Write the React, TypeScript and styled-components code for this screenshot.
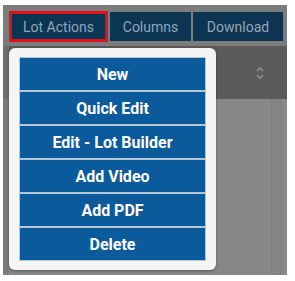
import React from 'react'
import styled, { createGlobalStyle } from 'styled-components'

const GlobalStyle = createGlobalStyle`
  body {
    margin: 0;
    background: #ffffff;
    font-family: Roboto, 'Liberation Sans', sans-serif;
  }
`

const Frame = styled.div`
  position: relative;
  width: 284px;
  height: 270px;
  margin: 5px 0 0 3px;
  background: #7c7c7c;
  display: flex;
  flex-direction: column;
`

const Toolbar = styled.div`
  display: flex;
  align-items: center;
  gap: 2px;
  padding: 6px 0 0 6px;
  height: 31px;
`

const ToolButton = styled.button<{ $width: number; $active?: boolean }>`
  box-sizing: border-box;
  width: ${({ $width }) => $width}px;
  height: ${({ $active }) => ($active ? 31 : 29)}px;
  margin: 0;
  padding: 0;
  background: #0c3554;
  border: ${({ $active }) => ($active ? '3px solid #e3101a' : 'none')};
  color: #91a6b6;
  font-family: Roboto, 'Liberation Sans', sans-serif;
  font-size: 14px;
  display: flex;
  align-items: center;
  justify-content: center;
`

const TableHead = styled.div`
  margin-top: 4px;
  height: 53px;
  background: #5b5b5b;
  display: flex;
  align-items: center;
  justify-content: flex-end;
  padding-right: 22px;
  border-left: 6px solid #6e6e6e;
`

const SortIcon = styled.svg`
  width: 10px;
  height: 14px;
`

const TableBody = styled.div`
  flex: 1;
  background: #878787;
  display: flex;
  justify-content: flex-end;
  border-left: 6px solid #7a7a7a;
`

const ColumnLine = styled.div`
  width: 9px;
  margin-right: 5px;
  background: #848484;
  border-left: 1px solid #7e7e7e;
  border-right: 1px solid #7e7e7e;
`

const Popup = styled.div`
  position: absolute;
  left: 6px;
  top: 43px;
  width: 207px;
  box-sizing: border-box;
  padding: 10px 11px;
  background: #f5f5f6;
  border-radius: 6px;
  box-shadow: 0 1px 3px rgba(0, 0, 0, 0.35);
  display: flex;
  flex-direction: column;
  gap: 2px;
`

const MenuItem = styled.div`
  height: 32px;
  background: #0b5a9c;
  color: #ffffff;
  font-weight: 700;
  font-size: 16px;
  display: flex;
  align-items: center;
  justify-content: center;
  box-shadow: 0 0 0 1px #b7c6d4;
`

const items = ['New', 'Quick Edit', 'Edit - Lot Builder', 'Add Video', 'Add PDF', 'Delete']

export default function App() {
  return (
    <>
      <GlobalStyle />
      <Frame>
        <Toolbar>
          <ToolButton $width={99} $active>
            Lot Actions
          </ToolButton>
          <ToolButton $width={81}>Columns</ToolButton>
          <ToolButton $width={90}>Download</ToolButton>
        </Toolbar>
        <TableHead>
          <SortIcon viewBox="0 0 10 14">
            <path d="M2 5 L5 2 L8 5 M2 9 L5 12 L8 9" fill="none" stroke="#8a8a8a" strokeWidth="1.6" />
          </SortIcon>
        </TableHead>
        <TableBody>
          <ColumnLine />
        </TableBody>
        <Popup>
          {items.map((label) => (
            <MenuItem key={label}>{label}</MenuItem>
          ))}
        </Popup>
      </Frame>
    </>
  )
}
